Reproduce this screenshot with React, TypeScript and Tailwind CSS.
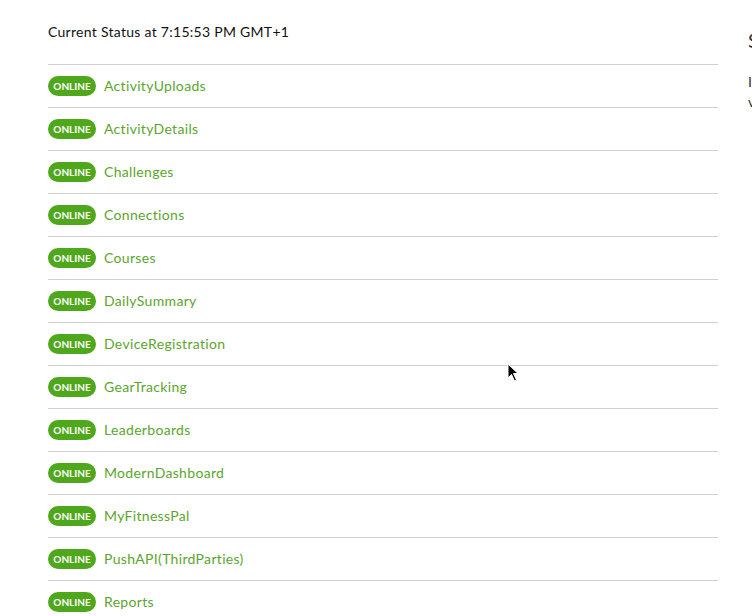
const services = [
  'ActivityUploads',
  'ActivityDetails',
  'Challenges',
  'Connections',
  'Courses',
  'DailySummary',
  'DeviceRegistration',
  'GearTracking',
  'Leaderboards',
  'ModernDashboard',
  'MyFitnessPal',
  'PushAPI(ThirdParties)',
  'Reports',
]

function Cursor() {
  return (
    <svg
      className="absolute left-[507px] top-[363px]"
      width="12"
      height="19"
      viewBox="0 0 12 19"
    >
      <path d="M1 1 L1 15 L4.5 11.5 L7.5 18 L9.5 17 L6.5 10.5 L11 10.5 Z" fill="#000" stroke="#fff" strokeWidth="1" />
    </svg>
  )
}

export default function App() {
  return (
    <div className="relative h-[616px] w-[752px] overflow-hidden bg-white font-['Lato','Open_Sans',sans-serif]">
      <div className="flex pl-[48px] pt-[22px]">
        <div className="w-[670px] shrink-0">
          <div className="h-[42px] text-[14px] leading-[20px] tracking-[0.28px] text-[#111]">
            Current Status at 7:15:53 PM GMT+1
          </div>
          {services.map((name) => (
            <div key={name} className="flex h-[43px] items-center gap-[8px] border-t border-[#d0d0d0]">
              <span className="flex h-[20px] w-[48px] items-center justify-center rounded-full bg-[#4fa81c] text-[10px] font-bold text-white">
                ONLINE
              </span>
              <span className="-mt-[2px] text-[14px] tracking-[0.32px] text-[#5ca52d]">{name}</span>
            </div>
          ))}
        </div>
        <div className="ml-[30px] shrink-0 text-[#333]">
          <div className="mt-[2px] h-[32px] text-[20px] leading-[32px]">Service Status</div>
          <div className="mt-[16px] text-[14px] leading-[20px]">
            If you are having trouble,<br />visit the support center
          </div>
        </div>
      </div>
      <Cursor />
    </div>
  )
}
